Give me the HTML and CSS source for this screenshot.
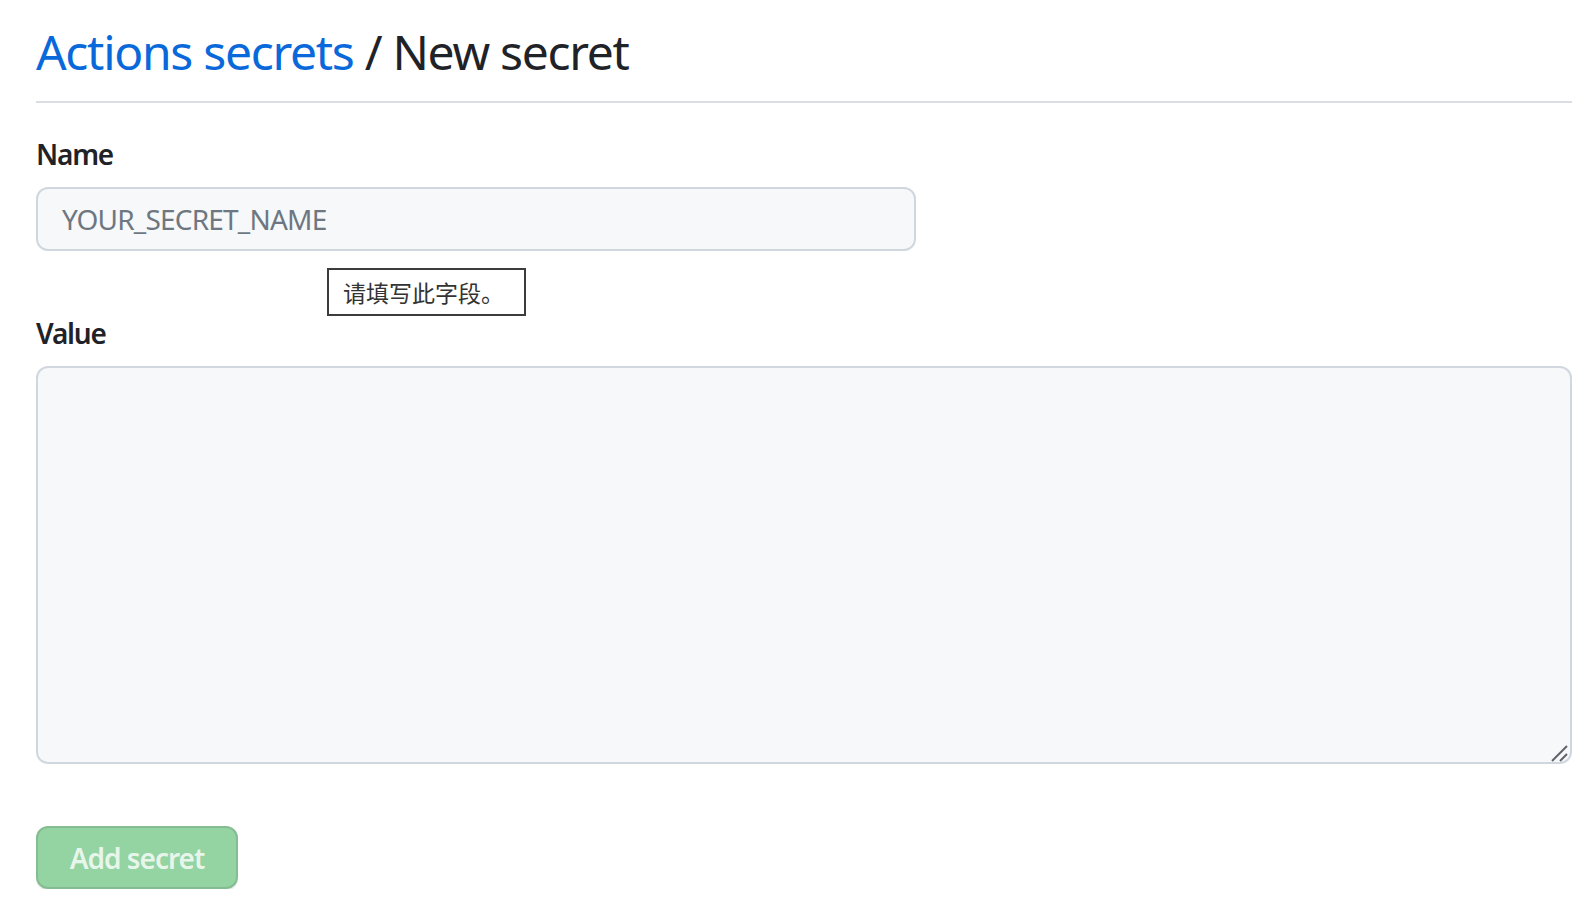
FILE: index.html
```html
<!DOCTYPE html>
<html lang="en">
<head>
<meta charset="utf-8">
<title>Actions secrets / New secret</title>
<link rel="stylesheet" href="styles.css">
</head>
<body>
<main class="page">
  <div class="subhead">
    <h2 class="subhead-title"><a href="#" class="subhead-link">Actions secrets</a> / New secret</h2>
  </div>
  <form class="secret-form">
    <div class="form-group name-group">
      <label class="form-label" for="secret_name">Name</label>
      <input class="form-control name-input" id="secret_name" type="text" placeholder="YOUR_SECRET_NAME">
      <div class="validation-bubble">请填写此字段。</div>
    </div>
    <div class="form-group">
      <label class="form-label" for="secret_value">Value</label>
      <div class="textarea-wrap">
        <textarea class="form-control value-input" id="secret_value"></textarea>
        <svg class="resize-grip" width="18" height="18" viewBox="0 0 18 18" aria-hidden="true">
          <path d="M2 17 L17 2" stroke="#5f6368" stroke-width="2" fill="none"/>
          <path d="M10 17 L17 10" stroke="#5f6368" stroke-width="2" fill="none"/>
        </svg>
      </div>
    </div>
    <div class="actions">
      <button type="button" class="btn-primary" disabled>Add secret</button>
    </div>
  </form>
</main>
</body>
</html>
```

FILE: styles.css
```css
html, body {
  margin: 0;
  padding: 0;
  background: #ffffff;
}

body {
  font-family: "Noto Sans", "Open Sans", sans-serif;
  color: #1f2328;
}

.page {
  padding: 16px 21px 0 36px;
}

.subhead {
  border-bottom: 2px solid #d8dee4;
  padding-bottom: 13px;
}

.subhead-title {
  margin: 0;
  font-size: 48px;
  line-height: 72px;
  font-weight: 400;
  letter-spacing: -1.3px;
  color: #1f2328;
}

.subhead-link {
  color: #0969da;
  text-decoration: none;
}

.secret-form {
  display: flex;
  flex-direction: column;
  padding-top: 30px;
}

.form-group {
  display: flex;
  flex-direction: column;
  align-items: stretch;
}

.name-group {
  position: relative;
  align-items: flex-start;
  margin-bottom: 61px;
}

.form-label {
  font-size: 28px;
  line-height: 42px;
  font-weight: 600;
  letter-spacing: -1.2px;
  margin-bottom: 12px;
}

.form-control {
  box-sizing: border-box;
  background: #f6f8fa;
  border: 2px solid #d0d7de;
  border-radius: 12px;
  font-family: inherit;
  color: #1f2328;
  outline: none;
}

.name-input {
  width: 880px;
  height: 64px;
  padding: 0 24px;
  font-size: 28px;
  letter-spacing: -0.8px;
}

.name-input::placeholder {
  color: #6e7781;
}

.textarea-wrap {
  position: relative;
  display: flex;
}

.value-input {
  width: 100%;
  height: 398px;
  resize: none;
  padding: 10px 16px;
  font-size: 28px;
}

.resize-grip {
  position: absolute;
  right: 4px;
  bottom: 2px;
  pointer-events: none;
}

.validation-bubble {
  position: absolute;
  left: 291px;
  top: 135px;
  box-sizing: border-box;
  width: 199px;
  height: 48px;
  padding: 0 14px;
  border: 2px solid #3c3c3c;
  background: #ffffff;
  color: #333333;
  font-family: "Noto Sans CJK SC", sans-serif;
  font-size: 23px;
  line-height: 44px;
  white-space: nowrap;
}

.actions {
  padding-top: 62px;
}

.btn-primary {
  box-sizing: border-box;
  width: 202px;
  height: 63px;
  padding: 0;
  white-space: nowrap;
  background: #94d3a2;
  border: 2px solid #85bd92;
  border-radius: 12px;
  color: rgba(255, 255, 255, 0.8);
  font-family: inherit;
  font-size: 28px;
  font-weight: 600;
  letter-spacing: -1px;
  box-shadow: 0 2px 0 rgba(31, 35, 40, 0.08);
}
```
